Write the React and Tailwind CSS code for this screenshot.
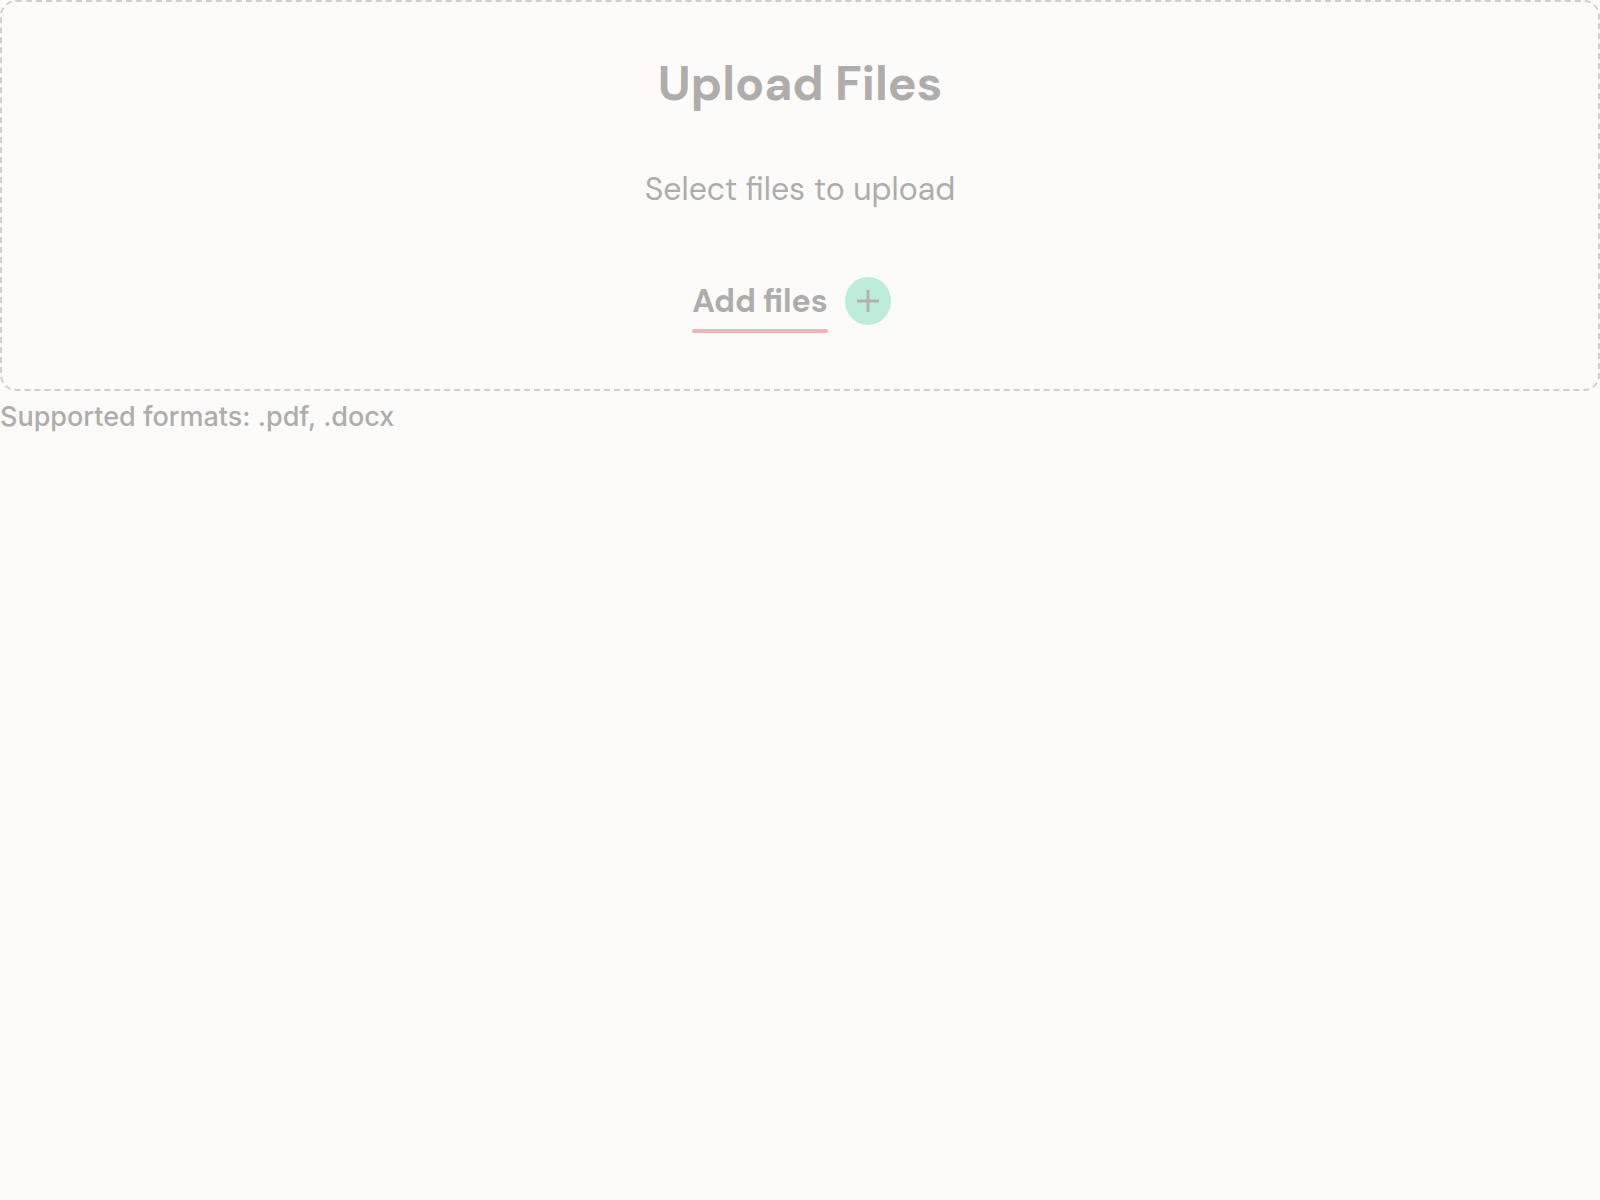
export default function App() {
  return (
    <main className="min-h-screen bg-[#fcfbf9] text-[#aeadab] font-['DM_Sans','Inter',sans-serif]">
      <section className="flex flex-col items-center rounded-2xl border-2 border-dashed border-[#cfcecc] pt-12 pb-14">
        <h1 className="text-5xl leading-[68px] font-bold">Upload Files</h1>
        <p className="mt-12 text-[32px] leading-[46px]">Select files to upload</p>
        <button type="button" className="mt-[65px] flex items-start gap-[17px] pr-[17px] font-bold">
          <span className="flex flex-col gap-1 text-[32px] leading-[48px] after:h-1 after:rounded-full after:bg-[#eeb5b9] after:content-['']">
            Add files
          </span>
          <span className="grid h-12 w-[46px] place-items-center rounded-[50%] bg-[#beecdb]">
            <svg viewBox="0 0 22 22" className="size-[22px]" stroke="#b2b1b0" strokeWidth="3" aria-hidden="true">
              <path d="M11 0v22M0 11h22" />
            </svg>
          </span>
        </button>
      </section>
      <p className="pt-2 text-[27px] leading-9 font-medium font-['Inter',sans-serif]">Supported formats: .pdf, .docx</p>
    </main>
  );
}
